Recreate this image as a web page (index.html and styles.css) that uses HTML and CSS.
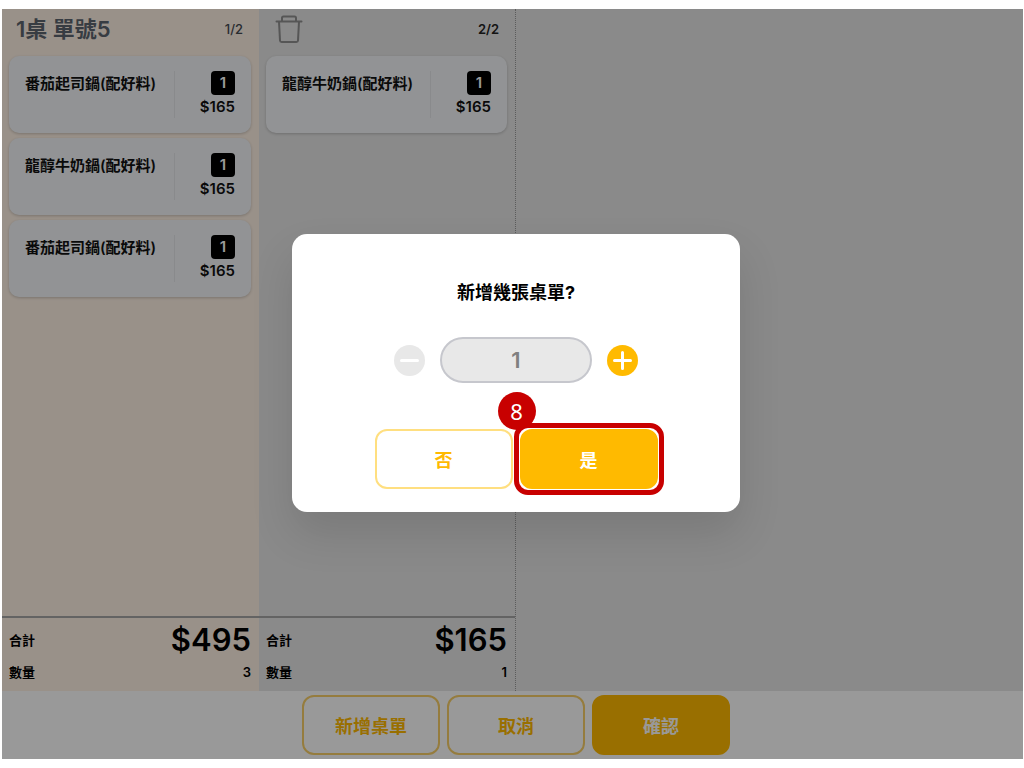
FILE: index.html
```
<!DOCTYPE html>
<html lang="zh-Hant">
  <head>
    <meta charset="utf-8">
    <title>新增桌單</title>
    <link rel="stylesheet" href="styles.css">
  </head>
  <body>
    <div class="screen">
      <main class="board">
        <section class="order order-active">
          <header class="order-header">
            <h1>1桌 單號5</h1>
            <span class="page">1/2</span>
          </header>
          <ul class="items">
            <li class="item">
              <span class="name">番茄起司鍋(配好料)</span>
              <div class="amount">
                <span class="qty">1</span>
                <span class="price">$165</span>
              </div>
            </li>
            <li class="item">
              <span class="name">龍醇牛奶鍋(配好料)</span>
              <div class="amount">
                <span class="qty">1</span>
                <span class="price">$165</span>
              </div>
            </li>
            <li class="item">
              <span class="name">番茄起司鍋(配好料)</span>
              <div class="amount">
                <span class="qty">1</span>
                <span class="price">$165</span>
              </div>
            </li>
          </ul>
          <div class="totals">
            <div class="total-row total-sum">
              <span>合計</span>
              <strong>$495</strong>
            </div>
            <div class="total-row">
              <span>數量</span>
              <span>3</span>
            </div>
          </div>
        </section>

        <section class="order order-second">
          <header class="order-header">
            <button type="button" class="trash" aria-label="刪除">
              <svg width="28" height="30" viewBox="0 0 28 30">
                <path d="M1.500 7.500H26.500M4 7.500L5 26.500Q5.100 28 6.600 28H21.400Q22.900 28 23 26.500L24 7.500M7 7.500V4Q7 2.500 8.500 2.500H19.500Q21 2.500 21 4V7.500" />
              </svg>
            </button>
            <span class="page page-current">2/2</span>
          </header>
          <ul class="items">
            <li class="item">
              <span class="name">龍醇牛奶鍋(配好料)</span>
              <div class="amount">
                <span class="qty">1</span>
                <span class="price">$165</span>
              </div>
            </li>
          </ul>
          <div class="totals">
            <div class="total-row total-sum">
              <span>合計</span>
              <strong>$165</strong>
            </div>
            <div class="total-row">
              <span>數量</span>
              <span>1</span>
            </div>
          </div>
        </section>
      </main>

      <footer class="actions">
        <button type="button" class="btn">新增桌單</button>
        <button type="button" class="btn">取消</button>
        <button type="button" class="btn btn-primary">確認</button>
      </footer>

      <div class="overlay">
        <div class="modal" role="dialog" aria-labelledby="modalTitle">
          <h2 id="modalTitle">新增幾張桌單?</h2>
          <div class="stepper">
            <button type="button" class="step" aria-label="減少" disabled>
              <svg width="31" height="31" viewBox="0 0 31 31">
                <path d="M7.500 15.500h16" />
              </svg>
            </button>
            <input type="text" class="count" value="1" aria-labelledby="modalTitle" readonly>
            <button type="button" class="step" aria-label="增加">
              <svg width="31" height="31" viewBox="0 0 31 31">
                <path d="M7.500 15.500h16M15.500 7.500v16" />
              </svg>
            </button>
          </div>
          <div class="choices">
            <button type="button" class="btn btn-no">否</button>
            <div class="marked">
              <button type="button" class="btn btn-primary">是</button>
              <span class="ring"></span>
              <span class="badge">8</span>
            </div>
          </div>
        </div>
      </div>
    </div>
  </body>
</html>
```

FILE: styles.css
```
* {
  box-sizing: border-box;
}

body {
  margin: 0;
  padding: 9px 1px 9px 2px;
  min-height: 100vh;
  display: flex;
  background: #fff;
  font-family: Inter, 'Noto Sans CJK TC', sans-serif;
  color: #000;
}

button,
input {
  font-family: inherit;
}

.screen {
  position: relative;
  flex: 1;
  display: flex;
  flex-direction: column;
  background: #fff;
}

/* Order columns */
.board {
  flex: 1;
  display: flex;
  background: #e6e6e6;
}

.order {
  width: 257px;
  display: flex;
  flex-direction: column;
}

.order-active {
  background: #fff2e5;
}

.order-second {
  border-right: 1px dotted #999;
}

.order-header {
  height: 47px;
  padding: 0 16px 8px 14px;
  display: flex;
  align-items: center;
  justify-content: space-between;
}

.order-header h1 {
  margin: 0;
  font-size: 22px;
  line-height: 24px;
  font-weight: 600;
  color: #5c646e;
}

.page {
  font-size: 13px;
  font-weight: 500;
  color: #444a52;
}

.page-current {
  font-weight: 600;
  color: #222;
}

.trash {
  padding: 0;
  border: none;
  margin-left: 2px;
  background: none;
  display: flex;
}

.trash svg {
  fill: none;
  stroke: #8f8f8f;
  stroke-width: 2;
  stroke-linejoin: round;
  stroke-linecap: round;
}

.items {
  flex: 1;
  margin: 0;
  padding: 0 8px 0 7px;
  list-style: none;
  display: flex;
  flex-direction: column;
  gap: 5px;
}

.item {
  height: 77px;
  padding: 15px 16px;
  border-radius: 10px;
  background: #f3f5f8;
  box-shadow: 0 1px 3px rgba(0, 0, 0, 0.2);
  display: flex;
  justify-content: space-between;
}

.name {
  font-size: 15px;
  line-height: 26px;
  font-weight: 600;
  color: #111;
}

.amount {
  width: 61px;
  border-left: 1px solid #e4e6e9;
  display: flex;
  flex-direction: column;
  align-items: flex-end;
}

.qty {
  width: 24px;
  height: 24px;
  border-radius: 4px;
  background: #000;
  color: #fff;
  font-size: 15px;
  line-height: 24px;
  font-weight: 600;
  text-align: center;
}

.price {
  font-size: 15px;
  line-height: 24px;
  font-weight: 600;
  color: #111;
}

.totals {
  height: 75px;
  padding: 1px 8px 0 7px;
  border-top: 2px solid #a5a5a5;
  font-size: 13px;
  font-weight: 600;
}

.total-row {
  display: flex;
  align-items: center;
  justify-content: space-between;
  line-height: 24px;
}

.total-sum {
  height: 41px;
}

.total-sum strong {
  font-size: 31px;
  font-weight: 600;
}

/* Bottom bar */
.actions {
  height: 68px;
  padding: 4px 0 4px 7px;
  display: flex;
  justify-content: center;
  gap: 7px;
}

.btn {
  width: 138px;
  height: 60px;
  border: 2px solid #f9cf68;
  border-radius: 12px;
  background: #fff;
  color: #ffb900;
  font-size: 18px;
  font-weight: 700;
  cursor: pointer;
}

.btn-primary {
  border-color: #ffba00;
  background: #ffba00;
  color: #fff;
}

.btn-no {
  border-color: #ffdf80;
}

/* Dialog */
.overlay {
  position: absolute;
  inset: 0;
  padding: 0 0 22px 7px;
  background: rgba(0, 0, 0, 0.4);
  display: flex;
  align-items: center;
  justify-content: center;
}

.modal {
  width: 448px;
  padding: 47px 0 23px;
  border-radius: 15px;
  background: #fff;
  box-shadow: 0 22px 44px rgba(0, 0, 0, 0.12);
}

.modal h2 {
  margin: 0 0 32px;
  font-size: 18px;
  line-height: 24px;
  font-weight: 700;
  text-align: center;
}

.stepper {
  margin-bottom: 46px;
  display: flex;
  align-items: center;
  justify-content: center;
  gap: 15px;
}

.step {
  width: 31px;
  height: 31px;
  padding: 0;
  border: none;
  border-radius: 50%;
  background: #ffba00;
}

.step:disabled {
  background: #e8e8e8;
}

.step svg {
  display: block;
  fill: none;
  stroke: #fff;
  stroke-width: 3;
  stroke-linecap: round;
}

.count {
  width: 152px;
  height: 46px;
  padding: 0;
  border: 2px solid #c6c7cd;
  border-radius: 23px;
  background: #e8e8e8;
  color: #808080;
  font-size: 22px;
  font-weight: 600;
  text-align: center;
}

.choices {
  display: flex;
  justify-content: center;
  gap: 7px;
}

.marked {
  position: relative;
}

.marked .btn {
  display: block;
}

.ring {
  position: absolute;
  inset: -6px;
  border: 5px solid #c80000;
  border-radius: 14px;
  pointer-events: none;
}

.badge {
  position: absolute;
  top: -37px;
  left: -22px;
  width: 38px;
  height: 38px;
  border-radius: 50%;
  background: #c80000;
  color: #fff;
  font-family: 'Noto Sans', sans-serif;
  font-size: 22px;
  line-height: 38px;
  text-align: center;
}
```
